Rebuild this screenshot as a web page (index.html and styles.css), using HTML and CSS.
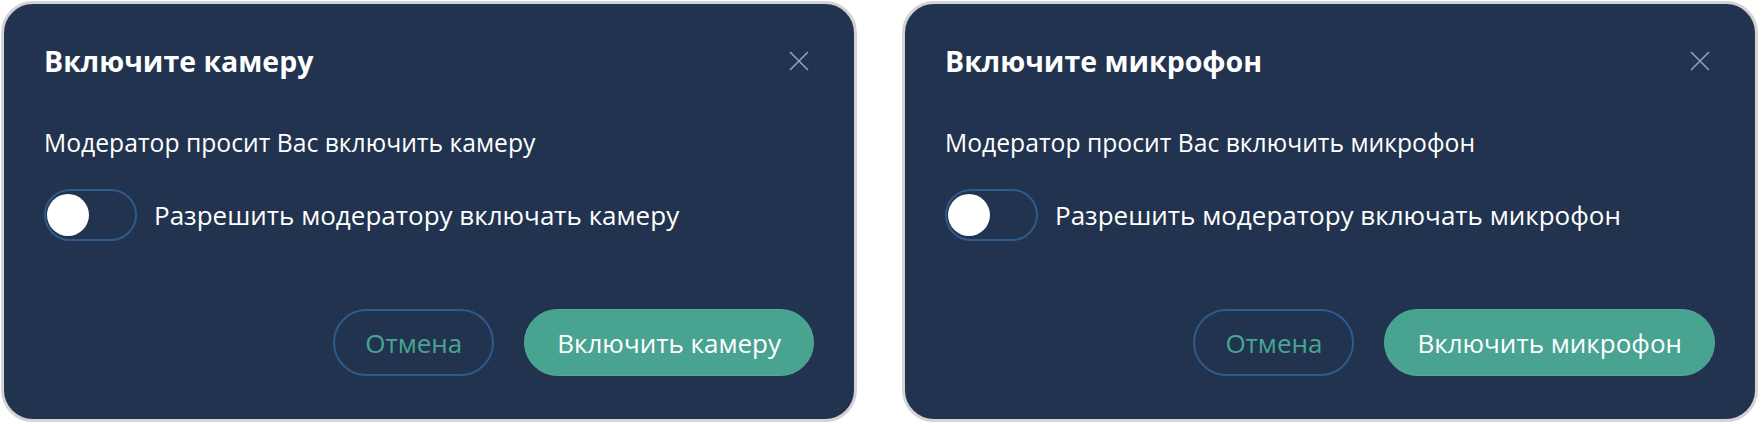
FILE: index.html
```html
<!DOCTYPE html>
<html lang="ru">
<head>
    <meta charset="UTF-8">
    <meta name="viewport" content="width=device-width, initial-scale=1.0">
    <title>Запрос модератора</title>
    <link rel="stylesheet" href="styles.css">
</head>
<body>
    <div class="dialog">
        <div class="dialog-head">
            <h2 class="dialog-title">Включите камеру</h2>
            <button class="close" type="button" aria-label="Закрыть">
                <svg width="20" height="20" viewBox="0 0 20 20"><path d="M1 1L19 19M19 1L1 19" stroke="currentColor" stroke-width="1.6" fill="none"/></svg>
            </button>
        </div>
        <p class="dialog-text">Модератор просит Вас включить камеру</p>
        <label class="switch-row">
            <input type="checkbox" class="switch-input">
            <span class="switch"><span class="knob"></span></span>
            <span class="switch-label">Разрешить модератору включать камеру</span>
        </label>
        <div class="actions">
            <button class="btn btn-cancel" type="button">Отмена</button>
            <button class="btn btn-primary" type="button">Включить камеру</button>
        </div>
    </div>

    <div class="dialog">
        <div class="dialog-head">
            <h2 class="dialog-title">Включите микрофон</h2>
            <button class="close" type="button" aria-label="Закрыть">
                <svg width="20" height="20" viewBox="0 0 20 20"><path d="M1 1L19 19M19 1L1 19" stroke="currentColor" stroke-width="1.6" fill="none"/></svg>
            </button>
        </div>
        <p class="dialog-text">Модератор просит Вас включить микрофон</p>
        <label class="switch-row">
            <input type="checkbox" class="switch-input">
            <span class="switch"><span class="knob"></span></span>
            <span class="switch-label">Разрешить модератору включать микрофон</span>
        </label>
        <div class="actions">
            <button class="btn btn-cancel" type="button">Отмена</button>
            <button class="btn btn-primary" type="button">Включить микрофон</button>
        </div>
    </div>
</body>
</html>
```

FILE: styles.css
```css
body{
    margin: 0;
    padding: 1px;
    display: flex;
    gap: 45px;
    background-color: #fff;
    font-family: "Open Sans", "Noto Sans", sans-serif;
    color: #fff;
}

.dialog{
    box-sizing: border-box;
    width: 856px;
    height: 421px;
    display: flex;
    flex-direction: column;
    padding: 40px 40px 43px 40px;
    background-color: #21334e;
    border: 3px solid #d3d3d3;
    border-radius: 32px;
}

.dialog-head{
    display: flex;
    justify-content: space-between;
    align-items: center;
    height: 34px;
}

.dialog-title{
    margin: 0;
    font-size: 28.5px;
    font-weight: 700;
    line-height: 34px;
}

.close{
    display: flex;
    align-items: center;
    justify-content: center;
    width: 30px;
    height: 30px;
    padding: 0;
    border: none;
    background: none;
    color: #8aa3bf;
    cursor: pointer;
}

.dialog-text{
    margin: 49px 0 0 0;
    font-size: 24.7px;
    line-height: 32px;
}

.switch-row{
    display: flex;
    align-items: center;
    gap: 17px;
    margin-top: 30px;
    cursor: pointer;
}

.switch-input{
    display: none;
}

.switch{
    box-sizing: border-box;
    display: flex;
    align-items: center;
    width: 93px;
    height: 52px;
    padding: 0 1px;
    border: 2px solid #2f5a8b;
    border-radius: 26px;
}

.knob{
    width: 42px;
    height: 42px;
    border-radius: 50%;
    background-color: #fff;
}

.switch-input:checked + .switch{
    justify-content: flex-end;
    background-color: #48a390;
}

.switch-label{
    font-size: 26px;
    line-height: 32px;
}

.actions{
    display: flex;
    justify-content: flex-end;
    gap: 30px;
    margin-top: auto;
}

.btn{
    box-sizing: border-box;
    height: 67px;
    padding: 0 32px;
    border-radius: 34px;
    font-family: inherit;
    font-size: 26px;
    cursor: pointer;
}

.btn-cancel{
    padding: 0 30px;
    border: 2px solid #2f5a8b;
    background: none;
    color: #48a593;
}

.btn-primary{
    border: 1px solid #55ab99;
    background-color: #48a390;
    color: #fff;
}
```
